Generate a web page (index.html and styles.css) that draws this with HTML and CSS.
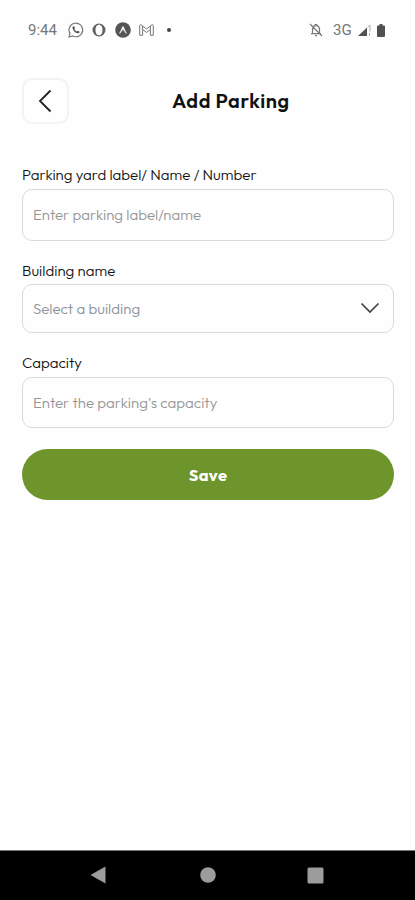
FILE: index.html
```html
<!DOCTYPE html>
<html lang="en">
<head>
<meta charset="utf-8">
<title>Add Parking</title>
<link rel="stylesheet" href="styles.css">
</head>
<body>
<div class="screen">
  <div class="status">
    <span class="time">9:44</span>
    <svg class="whatsapp" width="16" height="16" viewBox="0 0 16 16" fill="none" stroke="#777"><path d="M1 15l1-3.600A6.800 6.800 0 1 1 4.800 14z" stroke-width="1.200"/><path d="M5.200 4.300l1 0 .8 1.900-.7.900c.6 1.200 1.400 1.900 2.600 2.500l.9-.8 1.800.9c0 1.200-.9 1.700-1.800 1.600C7 10.900 4.900 8.500 4.500 6c0-.7.2-1.300.7-1.700z" fill="#555" stroke="none"/></svg>
    <svg class="opera" width="14" height="14" viewBox="0 0 14 14"><path fill="#606060" fill-rule="evenodd" d="M7 .5a6.500 6.500 0 1 0 0 13a6.500 6.500 0 1 0 0-13zM7 1.700c2.400 0 3.500 2.400 3.500 5.300s-1.100 5.300-3.500 5.300s-3.500-2.400-3.500-5.300s1.100-5.300 3.500-5.300z"/></svg>
    <svg class="expo" width="16" height="16" viewBox="0 0 16 16"><circle cx="8" cy="8" r="7.800" fill="#555"/><path d="M4 11.500C5.500 9.500 6.500 6.500 7.300 4.600h1.400c.8 1.900 1.800 4.900 3.300 6.900-1.500.8-2.600-2.500-4-3.700-1.400 1.200-2.500 4.500-4 3.700z" fill="#eee"/></svg>
    <svg class="gmail" width="15" height="12" viewBox="0 0 15 12" fill="none" stroke="#777" stroke-width="1"><path d="M.7 11.300V1.500C.7.600 1.600.500 2.200.9L7.500 5 12.800.9c.6-.4 1.500-.3 1.500.6v9.800h-2.900V5.500L7.500 8.400 3.600 5.500v5.800zM3.600 5.500V2M11.400 5.500V2"/></svg>
    <i class="more"></i>
    <svg class="bell" width="14" height="14" viewBox="0 0 14 14" fill="none" stroke="#777" stroke-width="1.200"><path d="M3.500 10.500V6.500C3.500 4.600 4.600 3 6.300 2.700V1.500h1.400v1.200C9.400 3 10.500 4.600 10.500 6.500v4M2 10.600h10M6 12.600h2M1 1l12 12"/></svg>
    <span class="net">3G</span>
    <svg class="signal" width="13" height="12" viewBox="0 0 13 12"><path d="M0 12L9 3.500V12z" fill="#505050"/><path d="M9.500 3.500L12 1v6.500M11.500 9v3" fill="none" stroke="#aaa"/></svg>
    <svg class="battery" width="8" height="13" viewBox="0 0 8 13"><path d="M2.500 0h3v1.500H7a1 1 0 0 1 1 1V12a1 1 0 0 1-1 1H1a1 1 0 0 1-1-1V2.500a1 1 0 0 1 1-1h1.500z" fill="#505050"/></svg>
  </div>
  <header class="header">
    <button class="back" aria-label="Back"><svg width="14" height="24" viewBox="0 0 14 24" fill="none" stroke="#222" stroke-width="1.800"><path d="M12.500 1.500L2 12l10.500 10.500"/></svg></button>
    <h1 class="title">Add Parking</h1>
  </header>
  <main class="form">
    <div class="label">Parking yard label/ Name / Number</div>
    <div class="field f1"><span>Enter parking label/name</span></div>
    <div class="label building">Building name</div>
    <div class="field f2"><span>Select a building</span><svg width="20" height="12" viewBox="0 0 20 12" fill="none" stroke="#444" stroke-width="1.700"><path d="M1.500 1.500L10 10l8.500-8.500"/></svg></div>
    <div class="label">Capacity</div>
    <div class="field f3"><span>Enter the parking's capacity</span></div>
    <button class="save">Save</button>
  </main>
  <nav class="nav">
    <svg width="16" height="18" viewBox="0 0 16 18"><path d="M.5 9L15.500.500v17z" fill="#9c9c9c"/></svg>
    <svg class="home" width="16" height="16" viewBox="0 0 16 16"><circle cx="8" cy="8" r="7.800" fill="#9c9c9c"/></svg>
    <svg width="17" height="17" viewBox="0 0 17 17"><rect x=".5" y=".5" width="16" height="16" rx="1.500" fill="#9c9c9c"/></svg>
  </nav>
</div>
</body>
</html>
```
FILE: styles.css
```css
* { box-sizing: border-box; }
body { margin: 0; background: #fefefe; font-family: Outfit, Lato, "Liberation Sans", sans-serif; }
svg { display: block; flex: none; }
button { font-family: inherit; padding: 0; }
.screen { width: 415px; height: 900px; display: flex; flex-direction: column; background: #fefefe; }
.status { height: 60px; display: flex; align-items: center; padding-left: 28px; font-family: Roboto, sans-serif; font-size: 15px; color: #777; flex: none; }
.time { width: 40px; white-space: nowrap; }
.opera { margin-left: 8px; }
.expo { margin-left: 9px; }
.gmail { margin-left: 8px; }
.more { width: 4px; height: 4px; border-radius: 50%; background: #444; margin-left: 13px; }
.bell { margin-left: 138px; }
.net { margin-left: 10px; width: 25px; font-size: 15px; }
.battery { margin-left: 6px; }
.header { height: 64px; padding: 18px 22px 0; display: flex; align-items: center; flex: none; }
.back { width: 47px; height: 46px; border: 2px solid #f3f3f3; border-radius: 10px; background: #fefefe; display: flex; align-items: center; justify-content: center; }
.back svg { margin-right: 1px; }
.title { margin: 0 0 1px 103px; font-size: 20px; line-height: 24px; font-weight: 600; color: #111; white-space: nowrap; letter-spacing: 0.600px; }
.form { flex: 1; padding: 41px 21px 0 22px; display: flex; flex-direction: column; }
.label { height: 20px; line-height: 20px; font-size: 15px; font-weight: 300; color: #111; margin-bottom: 4px; white-space: nowrap; }
.building { line-height: 22px; }
.field { border: 1.500px solid #dadada; border-radius: 10px; padding: 0 13px 1px 10px; display: flex; align-items: center; justify-content: space-between; font-size: 15px; font-weight: 300; color: #959595; white-space: nowrap; }
.f1 { height: 52px; margin-bottom: 19px; }
.f2 { height: 49px; margin-bottom: 20px; color: #8b9198; }
.f3 { height: 51px; margin-bottom: 21px; }
.save { height: 51px; flex: none; border: 0; border-radius: 26px; background: #6e952b; color: #fff; font-size: 16.500px; font-weight: 700; letter-spacing: 0.400px; }
.nav { height: 50px; flex: none; background: #000; border-top: 1px solid #777; display: flex; align-items: center; justify-content: space-between; padding: 0 91px 1px 90px; }
.home { margin-left: 2px; }
```
